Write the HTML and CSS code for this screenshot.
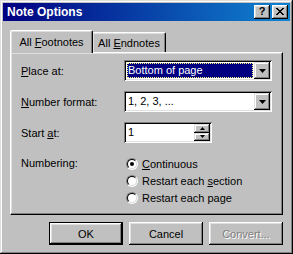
FILE: index.html
```html
<!DOCTYPE html>
<html>
<head>
<meta charset="utf-8">
<link rel="stylesheet" href="styles.css">
</head>
<body>
<div class="window">
  <div class="caption">
    <span class="title">Note Options</span>
    <div class="cap-btns">
      <span class="cap-btn help">?</span>
      <span class="cap-btn close"><svg width="8" height="7" viewBox="0 0 8 7"><path d="M0 0h2v1h1v1h2v-1h1v-1h2v1h-1v1h-1v1h-1v1h1v1h1v1h1v1h-2v-1h-1v-1h-2v1h-1v1h-2v-1h1v-1h1v-1h1v-1h-1v-1h-1v-1h-1z" fill="#000"/></svg></span>
    </div>
  </div>
  <div class="content">
    <div class="tabs">
      <div class="tab active"><span>All <u>F</u>ootnotes</span></div>
      <div class="tab"><span>All <u>E</u>ndnotes</span></div>
    </div>
    <div class="panel">
      <div class="row">
        <span class="label"><u>P</u>lace at:</span>
        <div class="combo">
          <span class="value selected"><span class="focus">Bottom of page</span></span>
          <span class="drop"><svg width="7" height="4" viewBox="0 0 7 4"><path d="M0 0h7l-3.5 4z" fill="#000"/></svg></span>
        </div>
      </div>
      <div class="row">
        <span class="label"><u>N</u>umber format:</span>
        <div class="combo">
          <span class="value">1, 2, 3, ...</span>
          <span class="drop"><svg width="7" height="4" viewBox="0 0 7 4"><path d="M0 0h7l-3.5 4z" fill="#000"/></svg></span>
        </div>
      </div>
      <div class="row">
        <span class="label">Start <u>a</u>t:</span>
        <div class="spin">
          <span class="value">1</span>
          <span class="spin-btns">
            <span class="sbtn"><svg width="5" height="3" viewBox="0 0 5 3"><path d="M0 3h5l-2.5-3z" fill="#000"/></svg></span>
            <span class="sbtn"><svg width="5" height="3" viewBox="0 0 5 3"><path d="M0 0h5l-2.5 3z" fill="#000"/></svg></span>
          </span>
        </div>
      </div>
      <div class="numbering">
        <span class="label">Numbering:</span>
        <div class="radios">
          <label class="radio"><span class="circle checked"></span><span><u>C</u>ontinuous</span></label>
          <label class="radio"><span class="circle"></span><span>Restart each <u>s</u>ection</span></label>
          <label class="radio"><span class="circle"></span><span>Restart each pa<u>g</u>e</span></label>
        </div>
      </div>
    </div>
    <div class="buttons">
      <span class="btn default">OK</span>
      <span class="btn">Cancel</span>
      <span class="btn disabled">Convert...</span>
    </div>
  </div>
</div>
</body>
</html>
```

FILE: styles.css
```css
html, body {
  margin: 0;
  padding: 0;
  background: #c0c0c0;
}
body {
  font-family: "Liberation Sans", Arial, sans-serif;
  font-size: 11px;
  color: #000;
}
.window {
  width: 293px;
  height: 254px;
  box-sizing: border-box;
  padding: 3px;
  background: #c0c0c0;
  box-shadow: inset -1px -1px #000, inset 1px 1px #dfdfdf, inset -2px -2px #808080, inset 2px 2px #fff;
}
.caption {
  height: 18px;
  display: flex;
  align-items: center;
  padding: 0 2px 0 4px;
  background: linear-gradient(to right, #000080, #1084d0);
}
.title {
  flex: 1;
  color: #fff;
  font-weight: bold;
  font-size: 12px;
  line-height: 14px;
}
.cap-btns {
  display: flex;
  gap: 2px;
}
.cap-btn {
  width: 16px;
  height: 14px;
  box-sizing: border-box;
  display: flex;
  align-items: center;
  justify-content: center;
  background: #c0c0c0;
  box-shadow: inset -1px -1px #000, inset 1px 1px #fff, inset -2px -2px #808080, inset 2px 2px #dfdfdf;
}
.cap-btn.help {
  font-weight: bold;
  font-size: 11px;
  line-height: 11px;
  padding-bottom: 1px;
}
.cap-btn.close svg {
  margin-bottom: 1px;
}
.content {
  padding: 9px 7px 0 7px;
}
.tabs {
  display: flex;
  align-items: flex-end;
  height: 22px;
}
.tab {
  height: 20px;
  box-sizing: border-box;
  display: flex;
  align-items: center;
  justify-content: center;
  border-top: 1px solid #fff;
  border-left: 1px solid #fff;
  border-right: 1px solid #000;
  border-radius: 2px 2px 0 0;
  box-shadow: inset -1px 0 #808080, inset 1px 1px #dfdfdf;
  padding-top: 1px;
}
.tab:nth-child(2) {
  width: 74px;
  margin-left: -1px;
}
.tab.active {
  width: 83px;
  height: 23px;
  margin-bottom: -1px;
  position: relative;
  z-index: 1;
  background: #c0c0c0;
  padding-bottom: 2px;
}
.panel {
  height: 163px;
  box-sizing: border-box;
  padding: 7px 10px 0 10px;
  border-top: 1px solid #fff;
  border-left: 1px solid #fff;
  border-right: 1px solid #000;
  border-bottom: 1px solid #000;
  box-shadow: inset -1px -1px #808080, inset 1px 1px #dfdfdf;
  display: flex;
  flex-direction: column;
  gap: 10px;
}
.row {
  display: flex;
  align-items: center;
  height: 21px;
}
.label {
  width: 103px;
  flex: none;
}
.combo, .spin {
  height: 21px;
  box-sizing: border-box;
  padding: 2px;
  background: #fff;
  display: flex;
  box-shadow: inset 1px 1px #808080, inset -1px -1px #fff, inset 2px 2px #000, inset -2px -2px #dfdfdf;
}
.combo {
  width: 149px;
}
.spin {
  width: 88px;
}
.value {
  flex: 1;
  display: flex;
  align-items: center;
  padding-left: 2px;
  line-height: 13px;
}
.value.selected {
  margin: 1px;
  padding: 0;
  background: #000080;
  color: #fff;
}
.focus {
  flex: 1;
  align-self: stretch;
  display: flex;
  align-items: center;
  padding-left: 1px;
  outline: 1px dotted #ffff80;
  outline-offset: -1px;
}
.drop {
  width: 16px;
  height: 17px;
  box-sizing: border-box;
  display: flex;
  align-items: center;
  justify-content: center;
  background: #c0c0c0;
  box-shadow: inset -1px -1px #000, inset 1px 1px #dfdfdf, inset -2px -2px #808080, inset 2px 2px #fff;
}
.spin-btns {
  display: flex;
  flex-direction: column;
  width: 16px;
}
.sbtn {
  height: 8.5px;
  flex: 1;
  display: flex;
  align-items: center;
  justify-content: center;
  background: #c0c0c0;
  box-shadow: inset -1px -1px #000, inset 1px 1px #dfdfdf, inset -2px -2px #808080, inset 2px 2px #fff;
}
.numbering {
  display: flex;
  align-items: flex-start;
  margin-top: 2px;
}
.numbering .label {
  line-height: 17px;
}
.radios {
  display: flex;
  flex-direction: column;
  padding-left: 2px;
}
.radio {
  display: flex;
  align-items: center;
  height: 17px;
  gap: 4px;
}
.circle {
  width: 12px;
  height: 12px;
  box-sizing: border-box;
  border-radius: 50%;
  border: 1px solid;
  border-color: #808080 #fff #fff #808080;
  position: relative;
}
.circle::before {
  content: "";
  position: absolute;
  inset: 0;
  border-radius: 50%;
  border: 1px solid;
  border-color: #000 #dfdfdf #dfdfdf #000;
  background: #fff;
}
.circle.checked::after {
  content: "";
  position: absolute;
  left: 3px;
  top: 3px;
  width: 4px;
  height: 4px;
  border-radius: 50%;
  background: #000;
}
.buttons {
  display: flex;
  justify-content: flex-end;
  gap: 6px;
  margin-top: 7px;
}
.btn {
  width: 74px;
  height: 23px;
  box-sizing: border-box;
  display: flex;
  align-items: center;
  justify-content: center;
  background: #c0c0c0;
  box-shadow: inset -1px -1px #000, inset 1px 1px #fff, inset -2px -2px #808080, inset 2px 2px #dfdfdf;
}
.btn.default {
  border: 1px solid #000;
}
.btn.disabled {
  color: #808080;
  text-shadow: 1px 1px #fff;
}
```
